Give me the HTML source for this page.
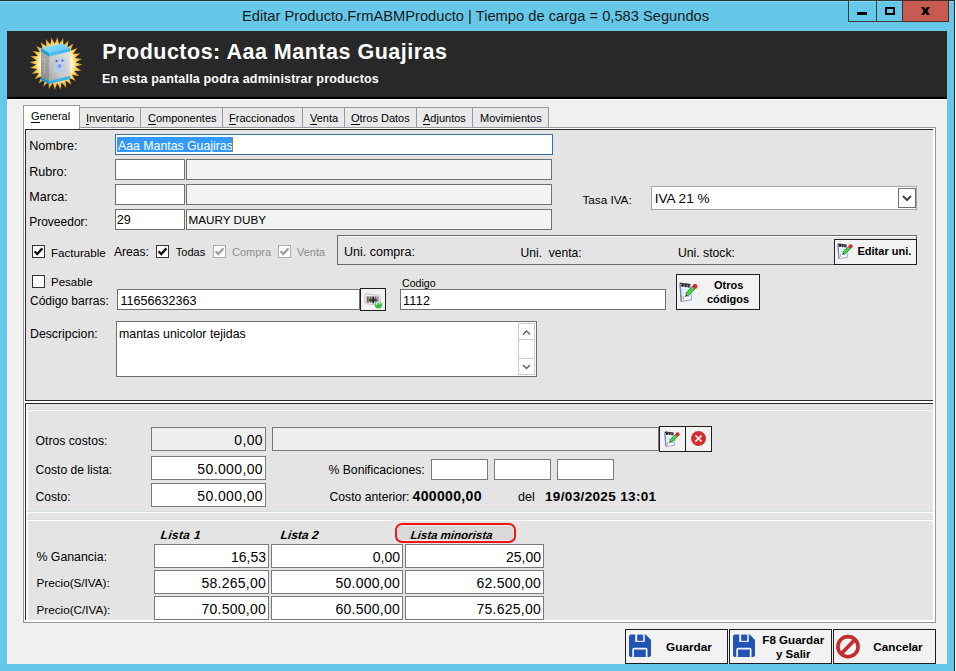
<!DOCTYPE html><html><head><meta charset="utf-8"><style>
html,body{margin:0;padding:0;}
body{width:956px;height:671px;position:relative;overflow:hidden;background:#66c8e8;font-family:"Liberation Sans",sans-serif;color:#000;}
.t{position:absolute;white-space:pre;}
.b{position:absolute;}
u{text-decoration:none;border-bottom:1px solid currentColor;}
</style></head><body>
<div class="b" style="left:0px;top:0px;width:956px;height:1px;background:#2a2f33;"></div>
<div class="b" style="left:0px;top:1px;width:954px;height:1px;background:#7fd8f6;"></div>
<div class="b" style="left:954px;top:0px;width:1px;height:671px;background:#2b2b2b;"></div>
<div class="b" style="left:955px;top:0px;width:1px;height:671px;background:#f4f4f4;"></div>
<div class="t title" style="left:242px;top:8.56px;font-size:14.7px;line-height:14.7px;color:#1a1a1a;">Editar Producto.FrmABMProducto | Tiempo de carga = 0,583 Segundos</div>
<div class="b" style="left:848px;top:0px;width:55px;height:22px;background:transparent;border:1px solid #353a3d;box-sizing:border-box;"></div>
<div class="b" style="left:876px;top:0px;width:1px;height:22px;background:#353a3d;"></div>
<div class="b" style="left:902px;top:0px;width:47px;height:22px;background:#c75b4f;border:1px solid #4a2a26;box-sizing:border-box;"></div>
<div class="b" style="left:857px;top:12px;width:10px;height:3px;background:#000;"></div>
<div class="b" style="left:885px;top:7px;width:10px;height:8px;background:transparent;border:2px solid #000;box-sizing:border-box;"></div>
<svg style="position:absolute;left:920px;top:6px" width="12" height="10" viewBox="0 0 12 10"><polygon points="1,1 4.1,1 5.5,3.3 6.9,1 10,1 7.3,5 10,9 6.9,9 5.5,6.7 4.1,9 1,9 3.7,5" fill="#000"/></svg>
<div class="b" style="left:7px;top:31px;width:940px;height:633px;background:#f0f0f0;"></div>
<div class="b" style="left:7px;top:31px;width:940px;height:66px;background:#282828;"></div>
<div class="b" style="left:7px;top:97px;width:940px;height:2px;background:#000;"></div>
<div class="b" style="left:7px;top:99px;width:940px;height:1px;background:#ffffff;"></div>
<div class="t h1" style="left:102.3px;top:41.70px;font-size:21.5px;line-height:21.5px;font-weight:bold;color:#fff;letter-spacing:0.5px;">Productos: Aaa Mantas Guajiras</div>
<div class="t h2" style="left:102px;top:72.92px;font-size:12.5px;line-height:12.5px;font-weight:bold;color:#fff;letter-spacing:0.17px;">En esta pantalla podra administrar productos</div>
<svg style="position:absolute;left:0;top:0" width="100" height="100" viewBox="0 0 100 100">
<defs><radialGradient id="sg" cx="56" cy="63.5" r="26.5" gradientUnits="userSpaceOnUse">
<stop offset="0" stop-color="#ffffff"/><stop offset="0.62" stop-color="#fff4c8"/><stop offset="0.78" stop-color="#f6cf58"/><stop offset="1" stop-color="#d88e10"/></radialGradient>
<linearGradient id="bf" x1="1" y1="0" x2="0" y2="1"><stop offset="0" stop-color="#e6e6e6"/><stop offset="0.6" stop-color="#c8c8c8"/><stop offset="1" stop-color="#a2a2a2"/></linearGradient>
<linearGradient id="bl" x1="0" y1="0" x2="0" y2="1"><stop offset="0" stop-color="#b0b0b0"/><stop offset="1" stop-color="#8a8a8a"/></linearGradient>
<linearGradient id="bt" x1="0" y1="0" x2="1" y2="1"><stop offset="0" stop-color="#9be4ff"/><stop offset="1" stop-color="#52c2f2"/></linearGradient>
</defs>
<polygon points="57.3,37.0 59.1,44.3 63.2,38.0 63.4,45.4 68.7,40.2 67.2,47.5 73.5,43.6 70.5,50.4 77.5,48.0 73.0,54.0 80.4,53.2 74.7,58.0 82.1,58.9 75.5,62.3 82.5,64.8 75.2,66.6 81.5,70.7 74.1,70.9 79.3,76.2 72.0,74.7 75.9,81.0 69.1,78.0 71.5,85.0 65.5,80.5 66.3,87.9 61.5,82.2 60.6,89.6 57.2,83.0 54.7,90.0 52.9,82.7 48.8,89.0 48.6,81.6 43.3,86.8 44.8,79.5 38.5,83.4 41.5,76.6 34.5,79.0 39.0,73.0 31.6,73.8 37.3,69.0 29.9,68.1 36.5,64.7 29.5,62.2 36.8,60.4 30.5,56.3 37.9,56.1 32.7,50.8 40.0,52.3 36.1,46.0 42.9,49.0 40.5,42.0 46.5,46.5 45.7,39.1 50.5,44.8 51.4,37.4 54.8,44.0" fill="url(#sg)"/>
<polygon points="41,48 49,53 49,84 41,80" fill="url(#bl)"/>
<polygon points="49,53 70,48 70,79 49,84" fill="url(#bf)"/>
<polygon points="41,48 62,43.5 70,48 49,53" fill="url(#bt)"/>
<polygon points="49,53 70,48 70,51.5 49,56.5" fill="#45bced"/>
<polygon points="41,48 49,53 49,56.5 41,51.5" fill="#2b9bd2"/>
<polygon points="49,81 70,76 70,79 49,84" fill="#38b2ea"/>
<polygon points="41,77 49,81 49,84 41,80" fill="#2590c8"/>
<path d="M44.5 58 V74" stroke="#d8d8d8" stroke-width="1" stroke-dasharray="2 1.2" opacity="0.8"/>
<ellipse cx="59.5" cy="65" rx="8" ry="3.2" fill="none" stroke="#8fe0ff" stroke-width="1" transform="rotate(-55 59.5 65)"/>
<ellipse cx="59.5" cy="65" rx="8" ry="3.2" fill="none" stroke="#a8c8ff" stroke-width="1" transform="rotate(50 59.5 65)"/>
<circle cx="59.5" cy="66" r="2" fill="#8090ff"/>
<circle cx="56.5" cy="61" r="1" fill="#802080"/><circle cx="62.5" cy="60.5" r="1" fill="#802080"/>
</svg>
<div class="b" style="left:23px;top:127px;width:913px;height:496px;background:#ffffff;border:1px solid #9599a2;box-sizing:border-box;"></div>
<div class="b" style="left:79px;top:107px;width:62px;height:21px;background:#e9e9e9;border:1px solid #9599a2;box-sizing:border-box;"></div>
<div class="b" style="left:140px;top:107px;width:83px;height:21px;background:#e9e9e9;border:1px solid #9599a2;box-sizing:border-box;"></div>
<div class="b" style="left:222px;top:107px;width:81px;height:21px;background:#e9e9e9;border:1px solid #9599a2;box-sizing:border-box;"></div>
<div class="b" style="left:302px;top:107px;width:43px;height:21px;background:#e9e9e9;border:1px solid #9599a2;box-sizing:border-box;"></div>
<div class="b" style="left:344px;top:107px;width:73px;height:21px;background:#e9e9e9;border:1px solid #9599a2;box-sizing:border-box;"></div>
<div class="b" style="left:416px;top:107px;width:57px;height:21px;background:#e9e9e9;border:1px solid #9599a2;box-sizing:border-box;"></div>
<div class="b" style="left:472px;top:107px;width:77px;height:21px;background:#e9e9e9;border:1px solid #9599a2;box-sizing:border-box;"></div>
<div class="b" style="left:23px;top:105px;width:57px;height:24px;background:#ffffff;border:1px solid #9599a2;box-sizing:border-box;border-bottom:none;"></div>
<div class="t " style="left:31px;top:110.89px;font-size:11px;line-height:11px;"><u>G</u>eneral</div>
<div class="t " style="left:86px;top:112.99px;font-size:11px;line-height:11px;"><u>I</u>nventario</div>
<div class="t " style="left:148px;top:112.99px;font-size:11px;line-height:11px;"><u>C</u>omponentes</div>
<div class="t " style="left:229px;top:112.99px;font-size:11px;line-height:11px;"><u>F</u>raccionados</div>
<div class="t " style="left:310px;top:112.99px;font-size:11px;line-height:11px;"><u>V</u>enta</div>
<div class="t " style="left:351px;top:112.99px;font-size:11px;line-height:11px;"><u>O</u>tros Datos</div>
<div class="t " style="left:423px;top:112.99px;font-size:11px;line-height:11px;"><u>A</u>djuntos</div>
<div class="t " style="left:480px;top:112.99px;font-size:11px;line-height:11px;">Movimientos</div>
<div class="b" style="left:25px;top:129px;width:908px;height:272px;background:#e4e4e4;"></div>
<div class="b" style="left:25px;top:129px;width:908px;height:1px;background:#2a2a2a;"></div>
<div class="b" style="left:25px;top:129px;width:1px;height:272px;background:#2a2a2a;"></div>
<div class="b" style="left:25px;top:400px;width:908px;height:1px;background:#2a2a2a;"></div>
<div class="t " style="left:29.2px;top:139.83px;font-size:12.6px;line-height:12.6px;">Nombre:</div>
<div class="t " style="left:29.2px;top:165.63px;font-size:12.6px;line-height:12.6px;">Rubro:</div>
<div class="t " style="left:29.2px;top:190.63px;font-size:12.6px;line-height:12.6px;">Marca:</div>
<div class="t " style="left:29.2px;top:216.24px;font-size:12px;line-height:12px;">Proveedor:</div>
<div class="b" style="left:115px;top:134px;width:438px;height:21px;background:#fff;border:1px solid #3c6e9e;box-sizing:border-box;"></div>
<div class="b" style="left:117px;top:137px;width:116px;height:15px;background:#3399ff;"></div>
<div class="t " style="left:118px;top:140.19px;font-size:12.3px;line-height:12.3px;color:#fff;">Aaa Mantas Guajiras</div>
<div class="b" style="left:232px;top:137px;width:1px;height:15px;background:#b8741e;"></div>
<div class="b" style="left:115px;top:159px;width:70px;height:21px;background:#fff;border:1px solid #707070;box-sizing:border-box;"></div>
<div class="b" style="left:186px;top:159px;width:366px;height:21px;background:#f3f3f3;border:1px solid #707070;box-sizing:border-box;"></div>
<div class="b" style="left:115px;top:184px;width:70px;height:21px;background:#fff;border:1px solid #707070;box-sizing:border-box;"></div>
<div class="b" style="left:186px;top:184px;width:366px;height:21px;background:#f3f3f3;border:1px solid #707070;box-sizing:border-box;"></div>
<div class="b" style="left:115px;top:209px;width:70px;height:21px;background:#fff;border:1px solid #707070;box-sizing:border-box;"></div>
<div class="b" style="left:186px;top:209px;width:366px;height:21px;background:#f3f3f3;border:1px solid #707070;box-sizing:border-box;"></div>
<div class="t " style="left:116.8px;top:213.53px;font-size:12.6px;line-height:12.6px;">29</div>
<div class="t " style="left:188.5px;top:213.50px;font-size:11.7px;line-height:11.7px;">MAURY DUBY</div>
<div class="t " style="left:582.5px;top:193.90px;font-size:11.7px;line-height:11.7px;">Tasa IVA:</div>
<div class="b" style="left:651px;top:186px;width:266px;height:24px;background:#fff;border:1px solid #a5a5a5;box-sizing:border-box;"></div>
<div class="b" style="left:898px;top:188px;width:18px;height:20px;background:#fff;border:1px solid #707070;box-sizing:border-box;"></div>
<svg style="position:absolute;left:900px;top:192px" width="14" height="12" viewBox="0 0 14 12"><path d="M3 4 L7 8 L11 4" fill="none" stroke="#444" stroke-width="2"/></svg>
<div class="t " style="left:654.7px;top:192.19px;font-size:13.6px;line-height:13.6px;">IVA 21 %</div>
<div class="b" style="left:32px;top:245px;width:13px;height:13px;background:#fff;border:1px solid #333;box-sizing:border-box;"></div>
<svg style="position:absolute;left:32px;top:245px" width="13" height="13" viewBox="0 0 13 13"><path d="M2.6 6.3 L5.2 9.1 L10.4 3.4" fill="none" stroke="#111" stroke-width="2.3"/></svg>
<div class="t " style="left:51px;top:246.58px;font-size:11.6px;line-height:11.6px;">Facturable</div>
<div class="t " style="left:114px;top:246.46px;font-size:12.1px;line-height:12.1px;">Areas:</div>
<div class="b" style="left:156px;top:245px;width:13px;height:13px;background:#fff;border:1px solid #333;box-sizing:border-box;"></div>
<svg style="position:absolute;left:156px;top:245px" width="13" height="13" viewBox="0 0 13 13"><path d="M2.6 6.3 L5.2 9.1 L10.4 3.4" fill="none" stroke="#111" stroke-width="2.3"/></svg>
<div class="t " style="left:175.8px;top:246.59px;font-size:11px;line-height:11px;">Todas</div>
<div class="b" style="left:213px;top:245px;width:13px;height:13px;background:#fff;border:1px solid #adadad;box-sizing:border-box;"></div>
<svg style="position:absolute;left:213px;top:245px" width="13" height="13" viewBox="0 0 13 13"><path d="M2.6 6.3 L5.2 9.1 L10.4 3.4" fill="none" stroke="#a0a0a0" stroke-width="2.3"/></svg>
<div class="t " style="left:232px;top:246.99px;font-size:11px;line-height:11px;color:#8d8d8d;">Compra</div>
<div class="b" style="left:278px;top:245px;width:13px;height:13px;background:#fff;border:1px solid #adadad;box-sizing:border-box;"></div>
<svg style="position:absolute;left:278px;top:245px" width="13" height="13" viewBox="0 0 13 13"><path d="M2.6 6.3 L5.2 9.1 L10.4 3.4" fill="none" stroke="#a0a0a0" stroke-width="2.3"/></svg>
<div class="t " style="left:297px;top:246.99px;font-size:11px;line-height:11px;color:#8d8d8d;">Venta</div>
<div class="b" style="left:337px;top:235px;width:580px;height:30px;background:transparent;border:1px solid #6a6a6a;box-sizing:border-box;"></div>
<div class="b" style="left:338px;top:236px;width:578px;height:1px;background:#ffffff;"></div>
<div class="t " style="left:344px;top:246.42px;font-size:12.5px;line-height:12.5px;">Uni. compra:</div>
<div class="t " style="left:520.5px;top:246.76px;font-size:12.1px;line-height:12.1px;">Uni.&nbsp; venta:</div>
<div class="t " style="left:678px;top:246.67px;font-size:12.2px;line-height:12.2px;">Uni. stock:</div>
<div class="b" style="left:834px;top:239px;width:83px;height:26px;background:#f2f2f2;border:1px solid #222;box-sizing:border-box;border-bottom-width:1.5px;border-right-width:1.5px;"></div>
<svg style="position:absolute;left:837px;top:243px" width="17" height="17" viewBox="0 0 17 17">
<path d="M0.8 0.8 L9.3 1.9 L10.6 14.3 L1.8 15.5 Z" fill="#fdfdff" stroke="#9aa4c4" stroke-width="0.9"/>
<path d="M1 2 L1.9 15.3" stroke="#6f7fd0" stroke-width="1.2"/>
<path d="M2.3 6 L9.6 6.6 M2.5 8.6 L9.8 9.2 M2.7 11.2 L10 11.8" stroke="#a8e0f4" stroke-width="0.9"/>
<path d="M1 1.2 L9.5 2.3" stroke="#3a3a3a" stroke-width="1.4"/>
<circle cx="3" cy="2.9" r="1.1" fill="#111"/><circle cx="5.6" cy="3.2" r="1.1" fill="#222"/><circle cx="8.1" cy="3.5" r="1.1" fill="#402060"/>
<path d="M6.6 10.2 L13 4" stroke="#2e8a2e" stroke-width="3.6"/>
<path d="M6.6 10.2 L13 4" stroke="#4cd44a" stroke-width="2.4"/>
<circle cx="13.6" cy="3.3" r="2" fill="#e02828"/>
<path d="M5.2 11.8 L6 9.6 L7.4 10.9 Z" fill="#222"/>
<path d="M3.3 11.5 L3.8 14" stroke="#e8904a" stroke-width="0.9"/>
</svg>
<div class="t " style="left:857.5px;top:246.19px;font-size:11px;line-height:11px;font-weight:bold;">Editar uni.</div>
<div class="b" style="left:32px;top:275px;width:13px;height:13px;background:#fff;border:1px solid #333;box-sizing:border-box;"></div>
<div class="t " style="left:51px;top:276.77px;font-size:11.5px;line-height:11.5px;">Pesable</div>
<div class="t " style="left:30px;top:295.04px;font-size:12px;line-height:12px;">C&oacute;digo barras:</div>
<div class="b" style="left:117px;top:289px;width:243px;height:21px;background:#fff;border:1px solid #707070;box-sizing:border-box;"></div>
<div class="t " style="left:120.5px;top:295.13px;font-size:12.6px;line-height:12.6px;">11656632363</div>
<div class="b" style="left:360px;top:288px;width:26px;height:23px;background:#f2f2f2;border:1px solid #1e1e1e;box-sizing:border-box;border-width:1.5px;"></div>
<svg style="position:absolute;left:364px;top:292px" width="18" height="17" viewBox="0 0 18 17">
<path d="M1.5 2 L14.5 3.2 Q16 3.4 16 5 V11.5 Q16 13 14.5 12.8 L2.5 11.8 Q1 11.6 1 10.2 V3.2 Q1 1.9 1.5 2 Z" fill="#f4f4f4" stroke="#b8b8b8" stroke-width="0.9"/>
<rect x="2.8" y="4.5" width="12" height="6" fill="#9a9a9a"/>
<path d="M3.3 4.5 V10.5" stroke="#a03030" stroke-width="0.9"/><path d="M4.5 4.5 V10.5" stroke="#40a040" stroke-width="0.7"/>
<path d="M6.5 4.5 V10.5" stroke="#555" stroke-width="0.8"/><path d="M8.3 4.5 V10.5" stroke="#c04040" stroke-width="0.7"/>
<path d="M9.5 4.5 V11.5" stroke="#2030a0" stroke-width="1"/><path d="M11.5 4.5 V10.5" stroke="#666" stroke-width="0.8"/>
<path d="M5 8 H13" stroke="#111" stroke-width="1.1"/><path d="M9 5.5 V11" stroke="#111" stroke-width="0.9"/>
<circle cx="14.5" cy="13" r="3.6" fill="#3fbf3f"/>
<path d="M12.8 13.2 A1.8 1.8 0 1 1 16 12.4" fill="none" stroke="#e8ffe8" stroke-width="1.1"/>
</svg>
<div class="t " style="left:402px;top:277.93px;font-size:10.6px;line-height:10.6px;">Codigo</div>
<div class="b" style="left:400px;top:289px;width:266px;height:21px;background:#fff;border:1px solid #707070;box-sizing:border-box;"></div>
<div class="t " style="left:403px;top:295.13px;font-size:12.6px;line-height:12.6px;letter-spacing:0.3px;">1112</div>
<div class="b" style="left:676px;top:274px;width:84px;height:36px;background:#f2f2f2;border:1px solid #1e1e1e;box-sizing:border-box;border-bottom-width:1.5px;border-right-width:1.5px;"></div>
<div style="position:absolute;left:679px;top:281.5px;transform:scale(1.18,1.25);transform-origin:0 0;">
<svg style="position:absolute;left:0px;top:0px" width="17" height="17" viewBox="0 0 17 17">
<path d="M0.8 0.8 L9.3 1.9 L10.6 14.3 L1.8 15.5 Z" fill="#fdfdff" stroke="#9aa4c4" stroke-width="0.9"/>
<path d="M1 2 L1.9 15.3" stroke="#6f7fd0" stroke-width="1.2"/>
<path d="M2.3 6 L9.6 6.6 M2.5 8.6 L9.8 9.2 M2.7 11.2 L10 11.8" stroke="#a8e0f4" stroke-width="0.9"/>
<path d="M1 1.2 L9.5 2.3" stroke="#3a3a3a" stroke-width="1.4"/>
<circle cx="3" cy="2.9" r="1.1" fill="#111"/><circle cx="5.6" cy="3.2" r="1.1" fill="#222"/><circle cx="8.1" cy="3.5" r="1.1" fill="#402060"/>
<path d="M6.6 10.2 L13 4" stroke="#2e8a2e" stroke-width="3.6"/>
<path d="M6.6 10.2 L13 4" stroke="#4cd44a" stroke-width="2.4"/>
<circle cx="13.6" cy="3.3" r="2" fill="#e02828"/>
<path d="M5.2 11.8 L6 9.6 L7.4 10.9 Z" fill="#222"/>
<path d="M3.3 11.5 L3.8 14" stroke="#e8904a" stroke-width="0.9"/>
</svg>
</div>
<div class="t " style="left:714px;top:280.19px;font-size:11px;line-height:11px;font-weight:bold;">Otros</div>
<div class="t " style="left:707px;top:293.69px;font-size:11px;line-height:11px;font-weight:bold;">c&oacute;digos</div>
<div class="t " style="left:30px;top:327.59px;font-size:12.3px;line-height:12.3px;">Descripcion:</div>
<div class="b" style="left:116px;top:321px;width:421px;height:56px;background:#fff;border:1px solid #6e6e6e;box-sizing:border-box;"></div>
<div class="t " style="left:119px;top:327.50px;font-size:12.4px;line-height:12.4px;">mantas unicolor tejidas</div>
<div class="b" style="left:518px;top:323px;width:17px;height:52px;background:#fff;"></div>
<div class="b" style="left:518px;top:323px;width:17px;height:17px;background:#fff;border:1px solid #cdcdcd;box-sizing:border-box;"></div>
<div class="b" style="left:518px;top:339px;width:17px;height:20px;background:#fff;border:1px solid #cdcdcd;box-sizing:border-box;"></div>
<div class="b" style="left:518px;top:358px;width:17px;height:17px;background:#fff;border:1px solid #cdcdcd;box-sizing:border-box;"></div>
<svg style="position:absolute;left:518px;top:323px" width="17" height="52" viewBox="0 0 17 52"><path d="M5 11.5 L8.5 8 L12 11.5" fill="none" stroke="#606060" stroke-width="1.4"/><path d="M5 42 L8.5 45.5 L12 42" fill="none" stroke="#606060" stroke-width="1.4"/></svg>
<div class="b" style="left:25px;top:403px;width:908px;height:217px;background:#e4e4e4;"></div>
<div class="b" style="left:25px;top:403px;width:908px;height:1px;background:#2a2a2a;"></div>
<div class="b" style="left:25px;top:403px;width:1px;height:217px;background:#2a2a2a;"></div>
<div class="b" style="left:26px;top:404px;width:2px;height:216px;background:#fbfdff;"></div>
<div class="b" style="left:27px;top:409px;width:906px;height:1px;background:#d3dee8;"></div>
<div class="b" style="left:27px;top:410px;width:906px;height:1px;background:#ffffff;"></div>
<div class="b" style="left:27px;top:511px;width:906px;height:1px;background:#d3dee8;"></div>
<div class="b" style="left:27px;top:512px;width:906px;height:1px;background:#ffffff;"></div>
<div class="b" style="left:27px;top:519px;width:906px;height:1px;background:#d3dee8;"></div>
<div class="b" style="left:27px;top:520px;width:906px;height:1px;background:#ffffff;"></div>
<div class="t " style="left:35.6px;top:434.57px;font-size:12.2px;line-height:12.2px;">Otros costos:</div>
<div class="t " style="left:35.6px;top:463.66px;font-size:12.1px;line-height:12.1px;">Costo de lista:</div>
<div class="t " style="left:35.6px;top:490.96px;font-size:12.1px;line-height:12.1px;">Costo:</div>
<div class="b" style="left:151px;top:427px;width:115px;height:24px;background:#efefef;border:1px solid #7a7a7a;box-sizing:border-box;"></div>
<div class="t" style="right:693px;top:433.05px;font-size:14px;line-height:14px;letter-spacing:0.38px;">0,00</div>
<div class="b" style="left:151px;top:456px;width:115px;height:24px;background:#fff;border:1px solid #7a7a7a;box-sizing:border-box;"></div>
<div class="t" style="right:693px;top:461.85px;font-size:14px;line-height:14px;letter-spacing:0.38px;">50.000,00</div>
<div class="b" style="left:151px;top:483px;width:115px;height:24px;background:#fff;border:1px solid #7a7a7a;box-sizing:border-box;"></div>
<div class="t" style="right:693px;top:488.65px;font-size:14px;line-height:14px;letter-spacing:0.38px;">50.000,00</div>
<div class="b" style="left:272px;top:427px;width:387px;height:24px;background:#efefef;border:1px solid #7a7a7a;box-sizing:border-box;"></div>
<div class="b" style="left:659px;top:426px;width:27px;height:26px;background:#f2f2f2;border:1px solid #1e1e1e;box-sizing:border-box;border-width:1.5px;"></div>
<div class="b" style="left:685px;top:426px;width:27px;height:26px;background:#f2f2f2;border:1px solid #1e1e1e;box-sizing:border-box;border-width:1.5px;"></div>
<svg style="position:absolute;left:664px;top:431px" width="17" height="17" viewBox="0 0 17 17">
<path d="M0.8 0.8 L9.3 1.9 L10.6 14.3 L1.8 15.5 Z" fill="#fdfdff" stroke="#9aa4c4" stroke-width="0.9"/>
<path d="M1 2 L1.9 15.3" stroke="#6f7fd0" stroke-width="1.2"/>
<path d="M2.3 6 L9.6 6.6 M2.5 8.6 L9.8 9.2 M2.7 11.2 L10 11.8" stroke="#a8e0f4" stroke-width="0.9"/>
<path d="M1 1.2 L9.5 2.3" stroke="#3a3a3a" stroke-width="1.4"/>
<circle cx="3" cy="2.9" r="1.1" fill="#111"/><circle cx="5.6" cy="3.2" r="1.1" fill="#222"/><circle cx="8.1" cy="3.5" r="1.1" fill="#402060"/>
<path d="M6.6 10.2 L13 4" stroke="#2e8a2e" stroke-width="3.6"/>
<path d="M6.6 10.2 L13 4" stroke="#4cd44a" stroke-width="2.4"/>
<circle cx="13.6" cy="3.3" r="2" fill="#e02828"/>
<path d="M5.2 11.8 L6 9.6 L7.4 10.9 Z" fill="#222"/>
<path d="M3.3 11.5 L3.8 14" stroke="#e8904a" stroke-width="0.9"/>
</svg>
<svg style="position:absolute;left:690px;top:430px" width="17" height="17" viewBox="0 0 17 17"><circle cx="8.5" cy="8.5" r="7.5" fill="#d32f2f"/><path d="M5.5 5.5 L11.5 11.5 M11.5 5.5 L5.5 11.5" stroke="#fff" stroke-width="1.6"/></svg>
<div class="t " style="left:328.5px;top:464.47px;font-size:12.2px;line-height:12.2px;">% Bonificaciones:</div>
<div class="b" style="left:431px;top:459px;width:57px;height:21px;background:#fff;border:1px solid #7a7a7a;box-sizing:border-box;"></div>
<div class="b" style="left:494px;top:459px;width:57px;height:21px;background:#fff;border:1px solid #7a7a7a;box-sizing:border-box;"></div>
<div class="b" style="left:557px;top:459px;width:57px;height:21px;background:#fff;border:1px solid #7a7a7a;box-sizing:border-box;"></div>
<div class="t " style="left:329.5px;top:491.27px;font-size:12.2px;line-height:12.2px;">Costo anterior:</div>
<div class="t " style="left:412.5px;top:488.85px;font-size:14px;line-height:14px;font-weight:bold;letter-spacing:0.35px;">400000,00</div>
<div class="t " style="left:518px;top:490.63px;font-size:12.6px;line-height:12.6px;">del</div>
<div class="t " style="left:545px;top:489.87px;font-size:13.5px;line-height:13.5px;font-weight:bold;letter-spacing:0.35px;">19/03/2025 13:01</div>
<div class="t " style="left:160px;top:528.64px;font-size:12px;line-height:12px;font-weight:bold;font-style:italic;letter-spacing:0.3px;transform:skewX(-7deg);transform-origin:0 100%;">Lista 1</div>
<div class="t " style="left:279.5px;top:528.64px;font-size:12px;line-height:12px;font-weight:bold;font-style:italic;transform:skewX(-7deg);transform-origin:0 100%;">Lista 2</div>
<div class="b" style="left:394.5px;top:523.3px;width:121.5px;height:19.90000000000009px;background:#d9d9d9;border:2px solid #f01414;box-sizing:border-box;border-radius:7px;box-shadow:inset 0 0 0 1px #ececec;"></div>
<div class="t " style="left:410px;top:529.67px;font-size:11.5px;line-height:11.5px;font-weight:bold;font-style:italic;transform:skewX(-7deg);transform-origin:0 100%;">Lista minorista</div>
<div class="t " style="left:36.5px;top:550.99px;font-size:12.3px;line-height:12.3px;">% Ganancia:</div>
<div class="t " style="left:36.5px;top:577.30px;font-size:11.7px;line-height:11.7px;">Precio(S/IVA):</div>
<div class="t " style="left:36.5px;top:603.90px;font-size:11.7px;line-height:11.7px;">Precio(C/IVA):</div>
<div class="b" style="left:154px;top:544px;width:115px;height:24px;background:#fff;border:1px solid #7a7a7a;box-sizing:border-box;"></div>
<div class="t" style="right:690px;top:549.85px;font-size:14px;line-height:14px;">16,53</div>
<div class="b" style="left:271px;top:544px;width:132px;height:24px;background:#fff;border:1px solid #7a7a7a;box-sizing:border-box;"></div>
<div class="t" style="right:556px;top:549.85px;font-size:14px;line-height:14px;">0,00</div>
<div class="b" style="left:405px;top:544px;width:139px;height:24px;background:#fff;border:1px solid #7a7a7a;box-sizing:border-box;"></div>
<div class="t" style="right:415px;top:549.85px;font-size:14px;line-height:14px;">25,00</div>
<div class="b" style="left:154px;top:570px;width:115px;height:24px;background:#fff;border:1px solid #7a7a7a;box-sizing:border-box;"></div>
<div class="t" style="right:690px;top:575.85px;font-size:14px;line-height:14px;letter-spacing:0.25px;">58.265,00</div>
<div class="b" style="left:271px;top:570px;width:132px;height:24px;background:#fff;border:1px solid #7a7a7a;box-sizing:border-box;"></div>
<div class="t" style="right:556px;top:575.85px;font-size:14px;line-height:14px;letter-spacing:0.25px;">50.000,00</div>
<div class="b" style="left:405px;top:570px;width:139px;height:24px;background:#fff;border:1px solid #7a7a7a;box-sizing:border-box;"></div>
<div class="t" style="right:415px;top:575.85px;font-size:14px;line-height:14px;letter-spacing:0.25px;">62.500,00</div>
<div class="b" style="left:154px;top:596px;width:115px;height:24px;background:#fff;border:1px solid #7a7a7a;box-sizing:border-box;"></div>
<div class="t" style="right:690px;top:601.85px;font-size:14px;line-height:14px;letter-spacing:0.25px;">70.500,00</div>
<div class="b" style="left:271px;top:596px;width:132px;height:24px;background:#fff;border:1px solid #7a7a7a;box-sizing:border-box;"></div>
<div class="t" style="right:556px;top:601.85px;font-size:14px;line-height:14px;letter-spacing:0.25px;">60.500,00</div>
<div class="b" style="left:405px;top:596px;width:139px;height:24px;background:#fff;border:1px solid #7a7a7a;box-sizing:border-box;"></div>
<div class="t" style="right:415px;top:601.85px;font-size:14px;line-height:14px;letter-spacing:0.25px;">75.625,00</div>
<div class="b" style="left:625px;top:629px;width:103px;height:35px;background:#f2f2f2;border:1px solid #1e1e1e;box-sizing:border-box;border-width:1.5px;"></div>
<svg style="position:absolute;left:628px;top:634px" width="24" height="24" viewBox="0 0 24 24">
<path d="M1 2.6 Q1 0.6 3 0.6 H17.7 L23 5.9 V21 Q23 23 21 23 H3 Q1 23 1 21 Z" fill="#2352b5"/>
<rect x="7.2" y="0" width="9.6" height="7.9" fill="#f2f2f2"/>
<rect x="9.2" y="0.6" width="6" height="6.2" fill="#2352b5"/>
<path d="M4.3 23 V15.6 Q4.3 13.8 6.1 13.8 H17.7 Q19.5 13.8 19.5 15.6 V23 Z" fill="#f2f2f2"/>
<rect x="6" y="15.5" width="11.8" height="7.5" fill="#2352b5"/>
</svg>
<div class="t " style="left:666px;top:641.51px;font-size:11.8px;line-height:11.8px;font-weight:bold;">Guardar</div>
<div class="b" style="left:729px;top:629px;width:103px;height:35px;background:#f2f2f2;border:1px solid #1e1e1e;box-sizing:border-box;border-width:1.5px;"></div>
<svg style="position:absolute;left:732px;top:634px" width="24" height="24" viewBox="0 0 24 24">
<path d="M1 2.6 Q1 0.6 3 0.6 H17.7 L23 5.9 V21 Q23 23 21 23 H3 Q1 23 1 21 Z" fill="#2352b5"/>
<rect x="7.2" y="0" width="9.6" height="7.9" fill="#f2f2f2"/>
<rect x="9.2" y="0.6" width="6" height="6.2" fill="#2352b5"/>
<path d="M4.3 23 V15.6 Q4.3 13.8 6.1 13.8 H17.7 Q19.5 13.8 19.5 15.6 V23 Z" fill="#f2f2f2"/>
<rect x="6" y="15.5" width="11.8" height="7.5" fill="#2352b5"/>
</svg>
<div class="t " style="left:762.3px;top:633.68px;font-size:11.6px;line-height:11.6px;font-weight:bold;">F8 Guardar</div>
<div class="t " style="left:776px;top:648.87px;font-size:11.5px;line-height:11.5px;font-weight:bold;">y Salir</div>
<div class="b" style="left:833px;top:629px;width:103px;height:35px;background:#f2f2f2;border:1px solid #1e1e1e;box-sizing:border-box;border-width:1.5px;"></div>
<svg style="position:absolute;left:835px;top:633.5px" width="26" height="26" viewBox="0 0 26 26"><circle cx="13" cy="12.7" r="10.1" fill="none" stroke="#c62b2b" stroke-width="3.6"/><path d="M19.5 6 L6.5 19.5" stroke="#c62b2b" stroke-width="3.6"/></svg>
<div class="t " style="left:873.3px;top:641.10px;font-size:11.7px;line-height:11.7px;font-weight:bold;">Cancelar</div>
</body></html>
